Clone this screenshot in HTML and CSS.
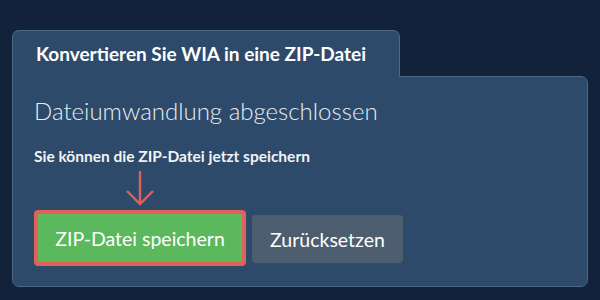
FILE: index.html
```html
<!DOCTYPE html>
<html lang="de">
<head>
  <meta charset="UTF-8">
  <meta name="viewport" content="width=device-width, initial-scale=1.0">
  <title>WIA in ZIP konvertieren</title>
  <link rel="stylesheet" href="styles.css">
</head>
<body>
  <div class="wrap">
    <div class="tab">Konvertieren Sie WIA in eine ZIP-Datei</div>
    <div class="panel">
      <h2 class="title">Dateiumwandlung abgeschlossen</h2>
      <p class="hint">Sie können die ZIP-Datei jetzt speichern</p>
      <div class="actions">
        <div class="save-wrap">
          <svg class="arrow" width="30" height="36" viewBox="0 0 30 36">
            <path d="M15 1 V34 M2 21 L15 34 L28 21" fill="none" stroke="#e0605a" stroke-width="2.4"/>
          </svg>
          <button class="btn btn-save">ZIP-Datei speichern</button>
        </div>
        <button class="btn btn-reset">Zurücksetzen</button>
      </div>
    </div>
  </div>
</body>
</html>
```

FILE: styles.css
```css
body {
  margin: 0;
  background-color: #11223a;
  font-family: Lato, "Noto Sans", sans-serif;
}
.wrap {
  padding: 30px 12px 0 12px;
}
.tab {
  display: inline-block;
  position: relative;
  z-index: 1;
  margin-bottom: -1px;
  padding: 12px 33px 12px 23px;
  background-color: #2d4a6a;
  border: 1px solid #4d6884;
  border-bottom: none;
  border-radius: 7px 7px 0 0;
  color: #ffffff;
  font-size: 19px;
  font-weight: bold;
  line-height: 22px;
}
.panel {
  background-color: #2d4a6a;
  border: 1px solid #4d6884;
  border-radius: 0 7px 7px 7px;
  padding: 19px 21px 20px 21px;
}
.title {
  margin: 0;
  color: #e8edf2;
  font-size: 24px;
  font-weight: 300;
  line-height: 30px;
}
.hint {
  margin: 22px 0 0 0;
  color: #f2f2f2;
  font-size: 15.5px;
  font-weight: bold;
  line-height: 17px;
}
.actions {
  display: flex;
  align-items: flex-end;
  margin-top: 5px;
}
.save-wrap {
  display: flex;
  flex-direction: column;
  align-items: center;
}
.arrow {
  display: block;
  margin-bottom: 4px;
}
.btn {
  font-family: Lato, "Noto Sans", sans-serif;
  font-size: 19.5px;
  color: #ffffff;
  border: none;
  height: 48px;
  padding: 0 10px;
  border-radius: 4px;
  cursor: pointer;
}
.btn-save {
  background-color: #5cb85c;
  border: 4px solid #e0605a;
  height: 56px;
  width: 212px;
  border-radius: 4px;
}
.btn-reset {
  background-color: #4d5e70;
  margin-left: 6px;
  margin-bottom: 3px;
  width: 151px;
}
```
